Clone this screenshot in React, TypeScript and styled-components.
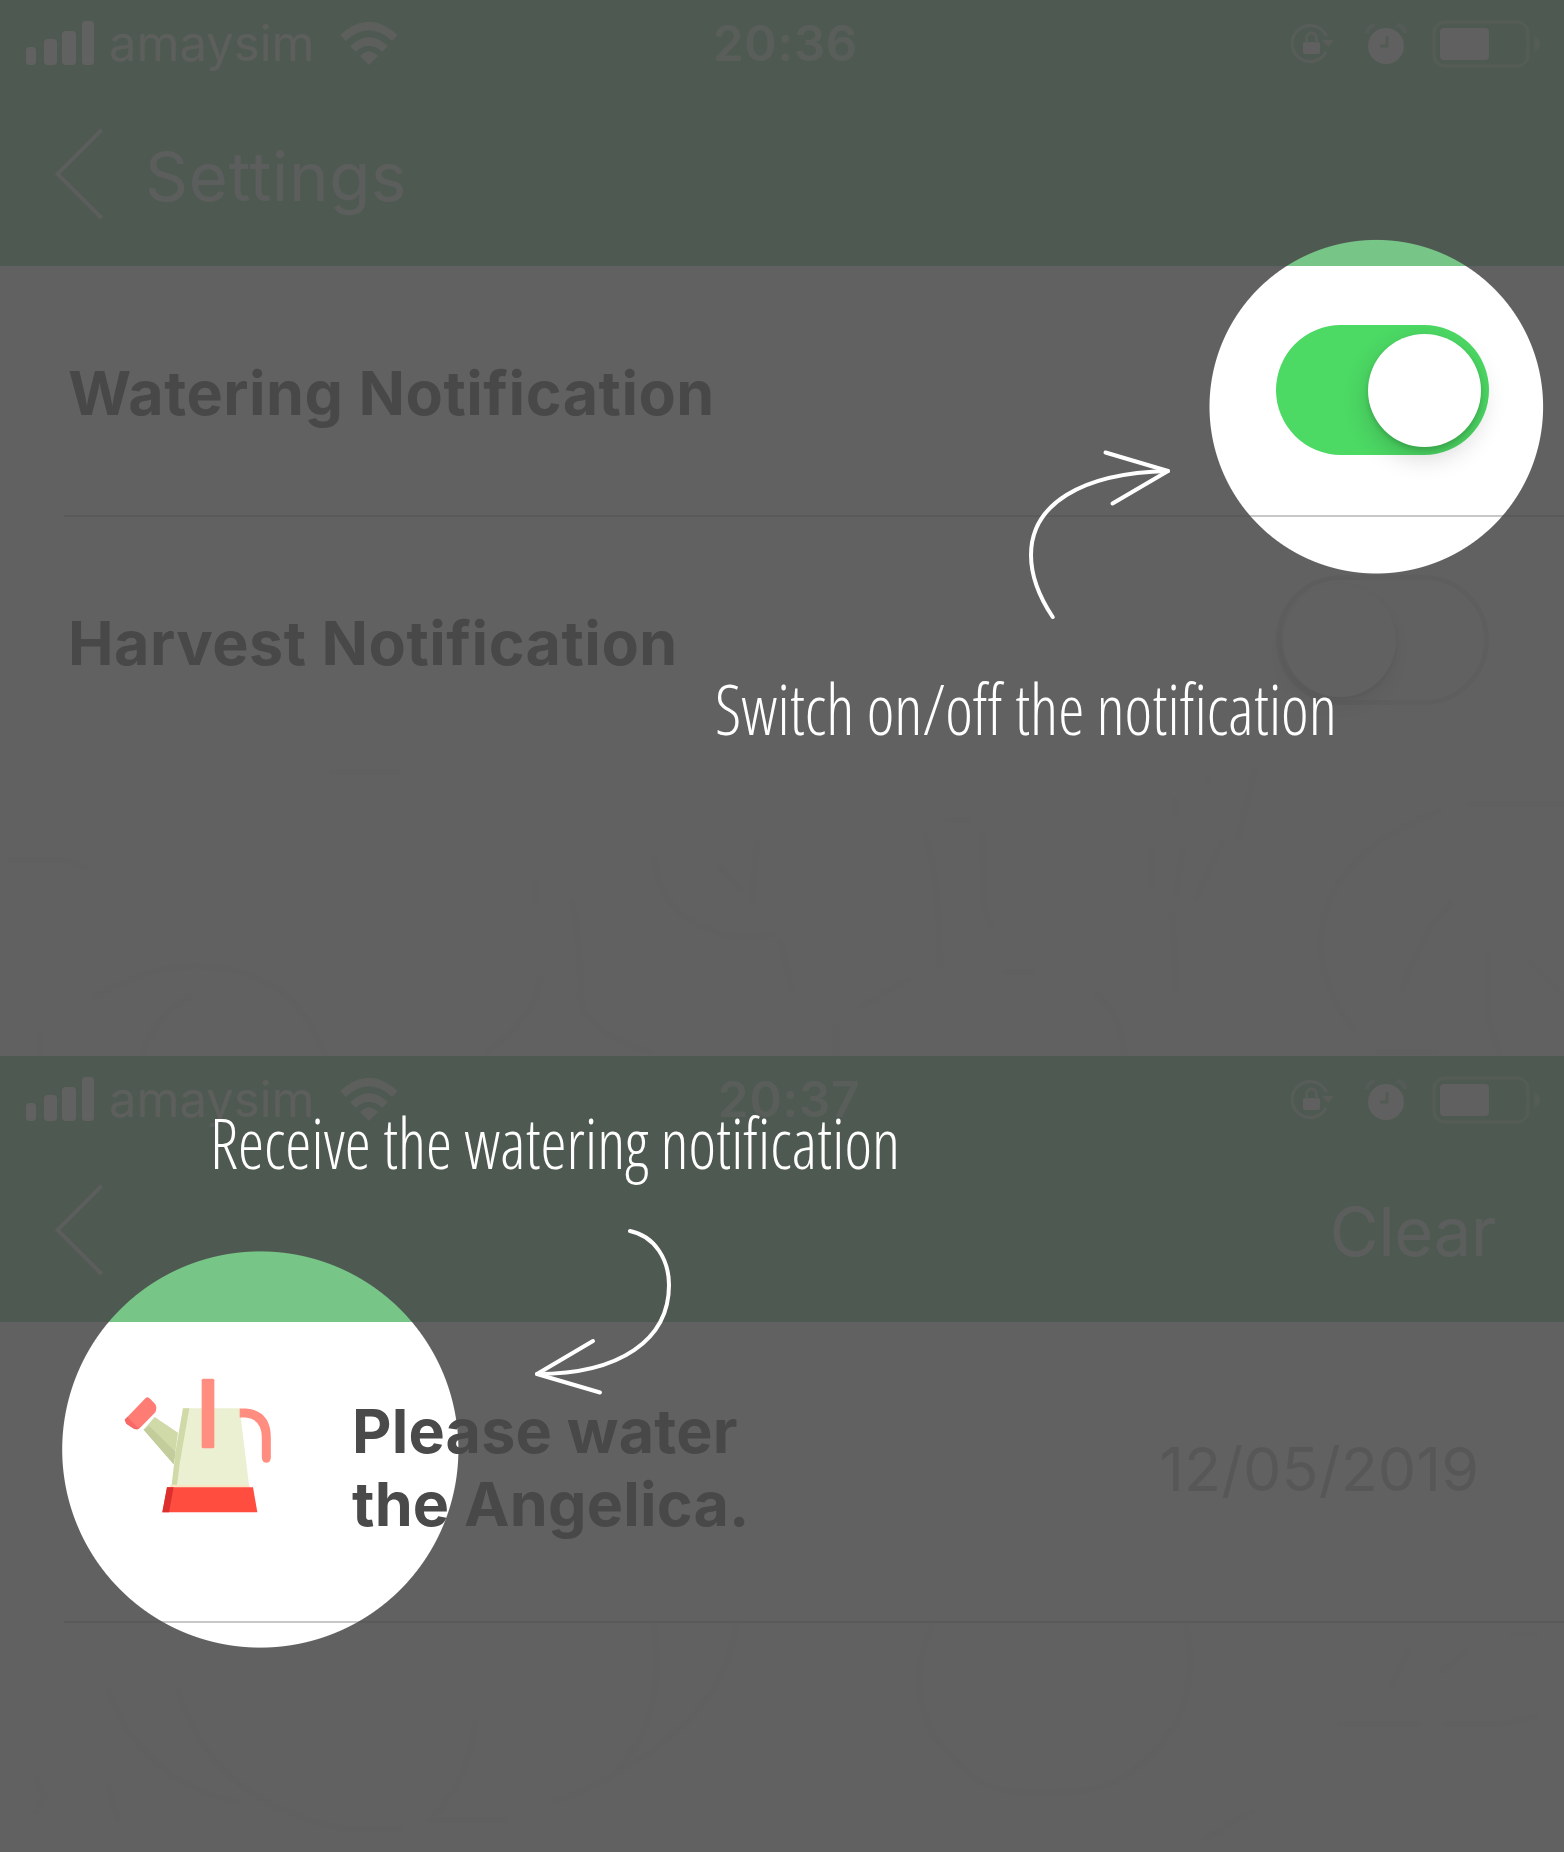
import React from "react";
import styled, { createGlobalStyle } from "styled-components";

const GlobalStyle = createGlobalStyle`
  * { box-sizing: border-box; }
  body { margin: 0; background: #616161; font-family: Inter, Roboto, sans-serif; }
`;

const Page = styled.main`
  position: relative;
  width: 1564px;
  height: 1852px;
  overflow: hidden;
  display: flex;
  flex-direction: column;
`;

const Screen = styled.section<{ $height: number }>`
  height: ${(p) => p.$height}px;
  flex: none;
  display: flex;
  flex-direction: column;
  background: #fff;
  color: #4a4a4a;
`;

const Header = styled.header`
  height: 266px;
  flex: none;
  background: #78c588;
  color: #f0f4f0;
`;

const StatusBar = styled.div`
  height: 86px;
  display: grid;
  grid-template-columns: 1fr auto 1fr;
  align-items: center;
  padding: 0 22px 0 26px;
`;

const Carrier = styled.div`
  display: flex;
  align-items: center;
  font-size: 49px;
  line-height: 86px;
  color: #d8ecdc;
`;

const CarrierName = styled.span`
  margin: 0 26px 0 14px;
`;

const Clock = styled.time<{ $indent: number }>`
  padding-left: ${(p) => p.$indent}px;
  font-size: 49px;
  line-height: 87px;
  font-weight: 600;
  letter-spacing: 0.8px;
  color: #cde6d2;
`;

const Indicators = styled.div`
  display: flex;
  justify-content: flex-end;
  align-items: center;
`;

const IndicatorGap = styled.span<{ $width: number }>`
  width: ${(p) => p.$width}px;
`;

const NavBar = styled.nav`
  height: 176px;
  display: flex;
  align-items: center;
  padding: 0 68px 0 54px;
  color: #d4e9d8;
`;

const NavTitle = styled.h1`
  margin: 4px 0 0 39px;
  font-size: 67px;
  font-weight: 400;
  letter-spacing: 0.7px;
`;

const NavAction = styled.span`
  margin: 3px 0 0 auto;
  font-size: 67px;
  letter-spacing: -0.3px;
`;

const Content = styled.div`
  position: relative;
  flex: 1;
  min-height: 0;
`;

const Row = styled.div`
  position: relative;
  height: 250px;
  display: flex;
  align-items: center;
  justify-content: space-between;
  padding: 0 75px 2px 68px;
`;

const Divider = styled.div<{ $bottom: number }>`
  position: absolute;
  left: 64px;
  right: 0;
  bottom: ${(p) => p.$bottom}px;
  height: 2px;
  background: #c8c8c8;
`;

const RowLabel = styled.span`
  margin-top: 5px;
  font-size: 61px;
  font-weight: 700;
  letter-spacing: 0.5px;
`;

const Switch = styled.span<{ $on: boolean }>`
  width: 213px;
  height: 130px;
  display: flex;
  align-items: center;
  justify-content: ${(p) => (p.$on ? "flex-end" : "flex-start")};
  padding: ${(p) => (p.$on ? "8px" : "2px")};
  border-radius: 65px;
  background: ${(p) => (p.$on ? "#4cd964" : "#fff")};
  border: ${(p) => (p.$on ? "none" : "5px solid #e6e6e6")};
`;

const Knob = styled.span`
  width: 113px;
  height: 113px;
  border-radius: 50%;
  background: #fff;
  box-shadow: 0 10px 26px rgba(0, 0, 0, 0.17), 0 3px 5px rgba(0, 0, 0, 0.14);
`;

const Message = styled.div`
  position: relative;
  height: 302px;
  display: flex;
  align-items: flex-start;
  padding: 55px 85px 0 123px;
`;

const MessageText = styled.p`
  width: 440px;
  margin: 18px 0 0 79px;
  font-size: 61px;
  line-height: 73.3px;
  font-weight: 700;
  letter-spacing: 0.2px;
`;

const MessageDate = styled.time`
  margin: 56px 0 0 auto;
  font-size: 61px;
  line-height: 73px;
  color: #b8b8b8;
`;

const Doodles = styled.svg`
  position: absolute;
  inset: 0;
  fill: none;
  stroke: #f5f5f5;
  stroke-width: 7;
  stroke-linecap: round;
`;

const Dimmer = styled.div`
  position: absolute;
  inset: 0;
  background: rgba(72, 72, 72, 0.862);
  mask-image: radial-gradient(circle at 1376.3px 406.7px, transparent 166.3px, #000 167.3px),
    radial-gradient(circle at 260.3px 1449.5px, transparent 197.6px, #000 198.6px);
  mask-composite: intersect;
`;

const Caption = styled.p<{ $left: number; $top: number; $stretch: number }>`
  position: absolute;
  left: ${(p) => p.$left}px;
  top: ${(p) => p.$top}px;
  margin: 0;
  color: #fff;
  font-family: "Open Sans", "Noto Sans", sans-serif;
  font-size: 70px;
  line-height: 90px;
  font-weight: 300;
  font-stretch: 75%;
  white-space: nowrap;
  transform: scaleX(${(p) => p.$stretch});
  transform-origin: left;
`;

const Arrows = styled.svg`
  position: absolute;
  inset: 0;
  fill: none;
  stroke: #fff;
  stroke-width: 4;
  stroke-linecap: round;
  stroke-linejoin: round;
`;

const SignalIcon = () => (
  <svg width="69" height="46" viewBox="0 0 69 46" fill="#fff">
    <rect x="0" y="26" width="10" height="18" rx="4" />
    <rect x="18" y="18" width="13" height="26" rx="4" />
    <rect x="36" y="10" width="14" height="34" rx="4" />
    <rect x="56" y="0" width="12" height="44" rx="4" />
  </svg>
);

const WifiIcon = () => (
  <svg width="58" height="44" viewBox="0 0 58 44" fill="none" stroke="currentColor" strokeWidth="8">
    <path d="M3 16Q29 -8 55 16" />
    <path d="M13 27Q29 12 45 27" />
    <path d="M20 34Q29 25 38 34L29 43Z" fill="currentColor" stroke="none" />
  </svg>
);

const LockIcon = () => (
  <svg width="46" height="46" viewBox="0 0 46 46" fill="none" stroke="#b9dec1" strokeWidth="3">
    <path d="M37.5 15A18 18 0 1 0 37 31" />
    <path d="M33 19H45L39.500 26Z" fill="#b9dec1" stroke="none" />
    <rect x="14" y="21" width="17" height="12" rx="2" fill="currentColor" stroke="none" />
    <path d="M17.500 22V17a5 5 0 0 1 10 0V22" />
  </svg>
);

const AlarmIcon = () => (
  <svg width="44" height="44" viewBox="0 0 44 44" fill="none" strokeWidth="4">
    <circle cx="21" cy="24" r="18" fill="currentColor" />
    <path d="M2 11Q3 4 10 3M32 3Q39 4 40 11" stroke="#a9d7b3" />
    <path d="M22 14V24H15" stroke="#90cf9d" strokeWidth="3" />
  </svg>
);

const BatteryIcon = () => (
  <svg width="110" height="48" viewBox="0 0 110 48" fill="currentColor">
    <rect x="2" y="2" width="94" height="44" rx="11" fill="none" stroke="currentColor" strokeOpacity="0.4" strokeWidth="3" />
    <rect x="8" y="8" width="49" height="32" rx="4" />
    <path d="M102 16Q108 19 108 24T102 32Z" opacity="0.4" />
  </svg>
);

const BackIcon = () => (
  <svg width="52" height="96" viewBox="0 0 52 98" fill="none" stroke="currentColor" strokeWidth="4">
    <path d="M48 4L3 49L48 94" />
  </svg>
);

const WateringCan = () => (
  <svg width="150" height="136.7" viewBox="250 440 450 410">
    <path d="M345 560L415 607L402 702L312 598Z" fill="#d0d9a8" />
    <path d="M312 598L328 586L408 665L402 702Z" fill="#c3cd9b" />
    <path d="M255 568L318 503Q324 498 332 506L347 522Q353 532 347 546L300 594Q290 601 278 592L260 580Z" fill="#ff7c74" />
    <path d="M255 568L263 560L298 595Q288 600 278 592L260 580Z" fill="#f76866" />
    <path d="M430 534H600L629 772H395Z" fill="#ecf0d2" />
    <path d="M430 534H449L420 700L411 772H395L408 660Z" fill="#d0d9a8" />
    <path d="M392 763H628L630 772H390Z" fill="#f8e5c5" />
    <rect x="486" y="445" width="38" height="209" rx="5" fill="#ff8e80" />
    <path d="M600 548H618Q680 554 680 622V682" fill="none" stroke="#ff8e80" strokeWidth="27" />
    <circle cx="680" cy="684" r="13" fill="#ff8e80" />
    <path d="M382 771H640L653 846H368Z" fill="#ff4d40" />
    <path d="M382 771H402L388 846H368Z" fill="#dd2f2d" />
  </svg>
);

const PhoneStatus = ({ time, indent }: { time: string; indent: number }) => (
  <StatusBar>
    <Carrier>
      <SignalIcon />
      <CarrierName>amaysim</CarrierName>
      <WifiIcon />
    </Carrier>
    <Clock $indent={indent}>{time}</Clock>
    <Indicators>
      <LockIcon />
      <IndicatorGap $width={30} />
      <AlarmIcon />
      <IndicatorGap $width={23} />
      <BatteryIcon />
    </Indicators>
  </StatusBar>
);

const SettingsDoodles = () => (
  <Doodles width="1564" height="790" viewBox="0 266 1564 790">
    <path d="M332 772H398M10 860H66L86 868M1470 804H1562" />
    <path d="M95 997Q190 942 270 984Q308 1008 325 1055M190 996Q152 1020 142 1055M40 1035V1055" />
    <path d="M535 882V902M572 900Q582 950 580 1000Q592 1036 650 1052M540 978Q538 1014 488 1052" />
    <path d="M654 858Q662 910 700 926Q735 944 772 934M780 940L792 990M757 842L752 900M720 866L742 892" />
    <path d="M947 820H968M925 835Q940 880 940 965M982 835L984 910L991 926" />
    <path d="M1255 770L1238 838M1208 776V782M1222 842L1195 900M1175 800V815M1151 850V886M1182 850L1176 895M1172 914L1176 990" />
    <path d="M1440 810Q1346 846 1326 910Q1308 970 1354 1030M1450 904Q1420 935 1402 990M1488 952V1020L1500 1055M1530 962L1564 996" />
    <path d="M862 1006Q880 996 908 980M836 1026V1055M1006 972H1032M1096 994Q1122 1014 1124 1055M1378 1052H1436" />
  </Doodles>
);

const InboxDoodles = () => (
  <Doodles width="1564" height="530" viewBox="0 1322 1564 530">
    <path d="M108 1690Q140 1780 236 1802M178 1690Q210 1802 345 1829H400M475 1722Q470 1780 430 1820H505" />
    <path d="M654 1626Q668 1730 604 1782M735 1626Q728 1730 555 1802" />
    <path d="M932 1626Q890 1720 985 1785Q1040 1802 1110 1785Q1208 1730 1186 1626" />
    <path d="M1340 1724H1418M1446 1724H1502L1535 1716M1468 1650L1440 1672M1408 1650L1392 1684M1512 1634H1536M1252 1812L1206 1838" />
    <path d="M36 1778L46 1796L36 1812M108 1786L118 1820" />
  </Doodles>
);

export default function App() {
  return (
    <>
      <GlobalStyle />
      <Page>
        <Screen $height={1056}>
          <Header>
            <PhoneStatus time="20:36" indent={3} />
            <NavBar>
              <BackIcon />
              <NavTitle>Settings</NavTitle>
            </NavBar>
          </Header>
          <Content>
            <SettingsDoodles />
            <Row>
              <RowLabel>Watering Notification</RowLabel>
              <Switch $on>
                <Knob />
              </Switch>
              <Divider $bottom={-1} />
            </Row>
            <Row>
              <RowLabel>Harvest Notification</RowLabel>
              <Switch $on={false}>
                <Knob />
              </Switch>
            </Row>
          </Content>
        </Screen>
        <Screen $height={796}>
          <Header>
            <PhoneStatus time="20:37" indent={10} />
            <NavBar>
              <BackIcon />
              <NavAction>Clear</NavAction>
            </NavBar>
          </Header>
          <Content>
            <InboxDoodles />
            <Message>
              <WateringCan />
              <MessageText>Please water the Angelica.</MessageText>
              <MessageDate>12/05/2019</MessageDate>
              <Divider $bottom={1} />
            </Message>
          </Content>
        </Screen>
        <Dimmer />
        <Caption $left={715} $top={663} $stretch={0.942}>
          Switch on/off the notification
        </Caption>
        <Caption $left={210} $top={1097} $stretch={0.939}>
          Receive the watering notification
        </Caption>
        <Arrows width="1564" height="1852" viewBox="0 0 1564 1852">
          <path d="M1052.7 617C1038 595 1031 575 1031 555C1031 505 1080 473 1168 471" />
          <path d="M1105.5 452.5L1168 471L1112.5 503.5" />
          <path d="M630 1231C655 1236 669 1260 669 1285C669 1340 620 1374 537 1374" />
          <path d="M593 1341L537 1374L600 1392.5" />
        </Arrows>
      </Page>
    </>
  );
}
